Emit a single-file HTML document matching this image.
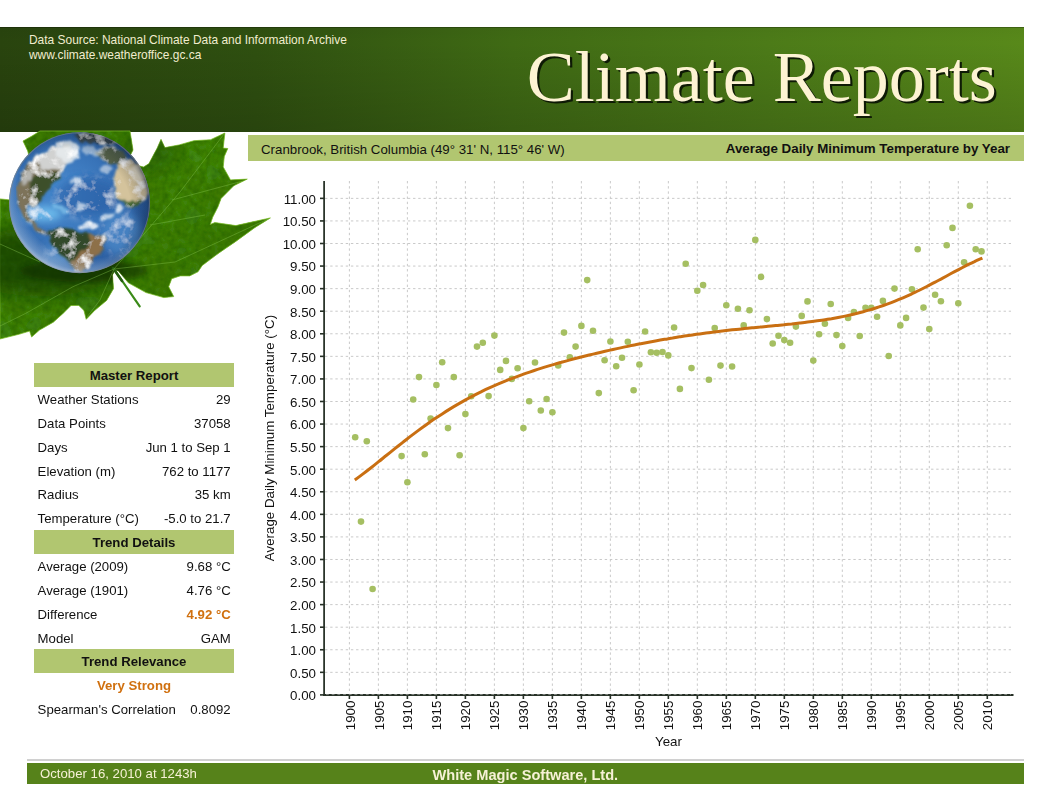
<!DOCTYPE html>
<html lang="en"><head><meta charset="utf-8"><title>Climate Reports</title>
<style>
html,body{margin:0;padding:0;background:#fff;}
body{width:1050px;height:811px;position:relative;overflow:hidden;font-family:"Liberation Sans",sans-serif;color:#111;}
.abs{position:absolute;}
#hdr{left:0;top:26.5px;width:1023.5px;height:105px;background:linear-gradient(180deg,rgba(0,0,0,0.03) 0%,rgba(0,0,0,0.0) 15%,rgba(0,0,0,0.15) 100%),linear-gradient(90deg,#29440e 0%,#2f5010 25%,#3f6a14 50%,#4c7b18 75%,#58891a 100%);box-shadow:inset 0 1px 0 rgba(0,0,0,0.25);}
#src{left:29px;top:32.6px;font-size:11.95px;line-height:15.5px;color:#f1ecce;white-space:nowrap;}
#title{left:526.8px;top:35.8px;font-family:"Liberation Serif",serif;font-size:72px;line-height:82px;color:#fdf3d3;white-space:nowrap;text-shadow:2.2px 2.2px 0 #0e1a05;}
#sub{left:248px;top:135.2px;width:775.5px;height:26.1px;background:#b1c670;font-size:13.33px;line-height:26px;white-space:nowrap;}
#sub .a{position:absolute;left:13px;top:1.7px;font-size:13.28px;}
#sub .b{position:absolute;right:13.5px;top:0.5px;font-weight:bold;}
svg{position:absolute;left:0;top:0;}
.bar{position:absolute;left:34.4px;width:199.2px;height:23.5px;background:#b1c670;text-align:center;font-weight:bold;font-size:13.2px;line-height:25.4px;}
.row{position:absolute;left:37.6px;width:193.1px;height:23.85px;font-size:13.2px;line-height:26.3px;white-space:nowrap;}
.row .l{position:absolute;left:0;}
.row .r{position:absolute;right:0;}
.ctr{text-align:center;left:34.4px;width:199.2px;}
.hl{color:#d0700f;font-weight:bold;}
#fline{left:26.5px;top:759px;width:997px;height:2px;background:#d0d0d0;}
#foot{left:26.5px;top:763.2px;width:997px;height:21.2px;background:#56821a;color:#f6f1d6;font-size:13.2px;line-height:21.6px;white-space:nowrap;}
#foot .a{position:absolute;left:13.5px;top:0;}
#foot .b{position:absolute;left:406px;top:1.4px;font-weight:bold;font-size:14.6px;}
</style></head><body>
<div id="hdr" class="abs"></div>
<svg width="1050" height="811" viewBox="0 0 1050 811">

<defs>
 <linearGradient id="lg" x1="0" y1="0" x2="1" y2="1">
  <stop offset="0" stop-color="#3d7f15"/><stop offset="0.45" stop-color="#428718"/><stop offset="1" stop-color="#347211"/>
 </linearGradient>
 <radialGradient id="gg" cx="0.40" cy="0.45" r="0.65">
  <stop offset="0" stop-color="#4a8dd2"/><stop offset="0.5" stop-color="#3873b8"/><stop offset="0.85" stop-color="#2b5c9e"/><stop offset="1" stop-color="#234a82"/>
 </radialGradient>
 <radialGradient id="gs" cx="0.42" cy="0.56" r="0.62">
  <stop offset="0.72" stop-color="#000" stop-opacity="0"/><stop offset="0.9" stop-color="#0a1a30" stop-opacity="0.25"/><stop offset="1" stop-color="#08142a" stop-opacity="0.65"/>
 </radialGradient>
 <radialGradient id="gl" cx="0.56" cy="0.40" r="0.62">
  <stop offset="0.8" stop-color="#cfe2f5" stop-opacity="0"/><stop offset="0.93" stop-color="#cfe2f5" stop-opacity="0.35"/><stop offset="1" stop-color="#dfeaf6" stop-opacity="0.7"/>
 </radialGradient>
 <clipPath id="gc"><circle cx="79.5" cy="202.7" r="70.5"/></clipPath>
 <clipPath id="lc"><path d="M23.0,141.0 L32.0,136.0 L40.0,131.0 L130.0,131.0 L133.0,150.0 L131.0,154.0 L125.0,162.0 L143.5,167.0 L148.8,163.8 L157.2,148.1 L161.0,139.3 L164.9,147.6 L179.2,144.9 L193.9,140.7 L210.6,139.7 L224.9,133.0 L223.2,148.1 L227.8,148.5 L224.3,156.4 L223.2,166.9 L230.5,179.9 L247.3,179.1 L233.7,185.8 L221.1,198.4 L218.0,206.8 L212.7,217.2 L210.2,224.6 L214.8,222.5 L235.8,225.6 L270.4,217.9 L254.7,227.7 L235.8,241.4 L219.0,252.9 L202.2,265.5 L198.0,271.8 L189.7,275.9 L180.0,275.9 L171.7,278.8 L168.7,286.7 L173.7,296.6 L163.8,297.6 L146.0,292.6 L128.3,282.8 L118.4,270.9 L115.0,270.0 L112.5,274.9 L113.5,288.7 L106.6,300.5 L94.7,310.4 L86.2,319.3 L83.9,310.4 L78.9,305.5 L71.0,305.5 L63.2,313.3 L53.3,322.2 L39.5,330.1 L31.6,337.0 L29.6,331.1 L19.7,334.1 L0.0,339.0 L0.0,198.9 L9.9,199.9 L40.0,200.0 L27.7,151.0Z"/></clipPath>
 <filter id="ln" x="0" y="0" width="100%" height="100%">
  <feTurbulence type="fractalNoise" baseFrequency="0.16" numOctaves="2" seed="3" result="n"/>
  <feColorMatrix in="n" type="matrix" values="0 0 0 0 0.02  0 0 0 0 0.12  0 0 0 0 0  1.3 0 0 0 -0.42" result="a"/>
  <feComposite in="a" in2="SourceGraphic" operator="in" result="sh"/>
  <feTurbulence type="fractalNoise" baseFrequency="0.035" numOctaves="2" seed="11" result="n2"/>
  <feColorMatrix in="n2" type="matrix" values="0 0 0 0 0.05  0 0 0 0 0.18  0 0 0 0 0  0 1.6 0 0 -0.55" result="a2"/>
  <feComposite in="a2" in2="SourceGraphic" operator="in" result="sh2"/>
  <feMerge><feMergeNode in="SourceGraphic"/><feMergeNode in="sh2"/><feMergeNode in="sh"/></feMerge>
 </filter>
 <filter id="gn" x="0" y="0" width="100%" height="100%">
  <feTurbulence type="fractalNoise" baseFrequency="0.014" numOctaves="4" seed="21" result="n"/>
  <feColorMatrix in="n" type="matrix" values="0 0 0 0 1  0 0 0 0 1  0 0 0 0 1  3.2 0 0 0 -1.6" result="a"/>
  <feComposite in="a" in2="SourceGraphic" operator="in" result="cl"/>
  <feMerge><feMergeNode in="SourceGraphic"/><feMergeNode in="cl"/></feMerge>
 </filter>
 <filter id="bl" x="-10%" y="-10%" width="120%" height="120%"><feTurbulence type="fractalNoise" baseFrequency="0.022" numOctaves="3" seed="4" result="t"/><feDisplacementMap in="SourceGraphic" in2="t" scale="42" xChannelSelector="R" yChannelSelector="G" result="d"/><feGaussianBlur in="d" stdDeviation="4.5"/></filter>
 <filter id="bl1"><feGaussianBlur stdDeviation="22"/></filter>
 <filter id="bl2"><feGaussianBlur stdDeviation="2.5"/></filter>
 <filter id="bl3" x="-50%" y="-50%" width="200%" height="200%"><feGaussianBlur stdDeviation="9"/></filter>
</defs>
<g filter="url(#ln)"><path d="M23.0,141.0 L32.0,136.0 L40.0,131.0 L130.0,131.0 L133.0,150.0 L131.0,154.0 L125.0,162.0 L143.5,167.0 L148.8,163.8 L157.2,148.1 L161.0,139.3 L164.9,147.6 L179.2,144.9 L193.9,140.7 L210.6,139.7 L224.9,133.0 L223.2,148.1 L227.8,148.5 L224.3,156.4 L223.2,166.9 L230.5,179.9 L247.3,179.1 L233.7,185.8 L221.1,198.4 L218.0,206.8 L212.7,217.2 L210.2,224.6 L214.8,222.5 L235.8,225.6 L270.4,217.9 L254.7,227.7 L235.8,241.4 L219.0,252.9 L202.2,265.5 L198.0,271.8 L189.7,275.9 L180.0,275.9 L171.7,278.8 L168.7,286.7 L173.7,296.6 L163.8,297.6 L146.0,292.6 L128.3,282.8 L118.4,270.9 L115.0,270.0 L112.5,274.9 L113.5,288.7 L106.6,300.5 L94.7,310.4 L86.2,319.3 L83.9,310.4 L78.9,305.5 L71.0,305.5 L63.2,313.3 L53.3,322.2 L39.5,330.1 L31.6,337.0 L29.6,331.1 L19.7,334.1 L0.0,339.0 L0.0,198.9 L9.9,199.9 L40.0,200.0 L27.7,151.0Z" fill="url(#lg)"/></g>
<path d="M23.0,141.0 L32.0,136.0 L40.0,131.0 L130.0,131.0 L133.0,150.0 L131.0,154.0 L125.0,162.0 L143.5,167.0 L148.8,163.8 L157.2,148.1 L161.0,139.3 L164.9,147.6 L179.2,144.9 L193.9,140.7 L210.6,139.7 L224.9,133.0 L223.2,148.1 L227.8,148.5 L224.3,156.4 L223.2,166.9 L230.5,179.9 L247.3,179.1 L233.7,185.8 L221.1,198.4 L218.0,206.8 L212.7,217.2 L210.2,224.6 L214.8,222.5 L235.8,225.6 L270.4,217.9 L254.7,227.7 L235.8,241.4 L219.0,252.9 L202.2,265.5 L198.0,271.8 L189.7,275.9 L180.0,275.9 L171.7,278.8 L168.7,286.7 L173.7,296.6 L163.8,297.6 L146.0,292.6 L128.3,282.8 L118.4,270.9 L115.0,270.0 L112.5,274.9 L113.5,288.7 L106.6,300.5 L94.7,310.4 L86.2,319.3 L83.9,310.4 L78.9,305.5 L71.0,305.5 L63.2,313.3 L53.3,322.2 L39.5,330.1 L31.6,337.0 L29.6,331.1 L19.7,334.1 L0.0,339.0 L0.0,198.9 L9.9,199.9 L40.0,200.0 L27.7,151.0Z" fill="none" stroke="#7dbd2a" stroke-width="0.9" opacity="0.8"/>
<g clip-path="url(#lc)">
 <ellipse cx="40" cy="262" rx="85" ry="34" fill="#0f3304" opacity="0.62" filter="url(#bl3)"/>
 <ellipse cx="84" cy="271" rx="64" ry="11" fill="#0b2603" opacity="0.5" filter="url(#bl2)"/>
 <ellipse cx="150" cy="150" rx="26" ry="22" fill="#163f07" opacity="0.35" filter="url(#bl3)"/>
</g>
<path d="M114,269 L139.7,306.4" stroke="#3a8a18" stroke-width="2.2" stroke-linecap="round" fill="none"/>
<path d="M113,268 L122,281" stroke="#245c10" stroke-width="2.6" stroke-linecap="round" fill="none"/>
<g stroke="#86c44e" stroke-width="0.8" fill="none" opacity="0.5">
 <path d="M114,269 L180,192 L224,134"/>
 <path d="M114,269 L73,286.7 L25.7,313.4 L0,326"/>
 <path d="M114,269 L175,262 L268,219"/>
 <path d="M114,269 L100,300 L87,317"/>
 <path d="M40,262 L0,244"/>
 <path d="M150,225 L205,215"/>
 <path d="M172,200 L243,181"/>
</g>
<circle cx="79.5" cy="202.7" r="70.5" fill="url(#gg)"/>
<g clip-path="url(#gc)">
 <g transform="translate(0,125) scale(0.18495)" filter="url(#gn)">
  <g filter="url(#bl1)">
   <ellipse cx="230" cy="480" rx="105" ry="42" fill="#74c4f2" opacity="0.85"/>
   <ellipse cx="470" cy="390" rx="170" ry="105" fill="#285aa2" opacity="0.6"/>
   <ellipse cx="660" cy="590" rx="110" ry="120" fill="#5a9ad8" opacity="0.55"/>
   <ellipse cx="330" cy="690" rx="90" ry="60" fill="#6aa6dc" opacity="0.45"/>
  </g>
  <g filter="url(#bl)">
   <path d="M95,330 L120,250 L170,190 L230,150 L300,120 L360,110 L400,130 L380,180 L340,230 L330,270 L290,300 L270,340 L240,370 L215,400 L205,430 L180,445 L150,430 L140,470 L160,500 L200,540 L240,570 L262,600 L230,590 L180,550 L130,500 L100,440 L88,380Z" fill="#7d735a"/>
   <path d="M165,290 L230,262 L300,268 L335,268 L295,305 L272,345 L242,375 L215,410 L188,405 L158,372 L150,330Z" fill="#3c4f2c"/>
   <path d="M200,160 L300,118 L400,128 L380,180 L340,232 L300,250 L240,240 L200,215Z" fill="#dfe3e6" opacity="0.85"/>
   <path d="M110,300 L150,240 L185,235 L165,290 L130,330Z" fill="#cfd3d6" opacity="0.7"/>
   <path d="M262,575 L300,558 L350,560 L420,575 L470,590 L530,595 L575,608 L570,640 L545,690 L500,730 L470,770 L430,790 L395,775 L370,740 L330,700 L290,660 L265,620Z" fill="#33492a"/>
   <path d="M470,592 L530,596 L574,609 L568,642 L544,690 L500,730 L470,770 L430,790 L400,778 L390,740 L430,700 L470,660 L480,620Z" fill="#8d704a"/>
   <path d="M615,260 L640,215 L700,190 L750,210 L785,270 L803,330 L795,390 L765,430 L720,447 L670,432 L640,400 L620,340Z" fill="#d4c39c"/>
   <path d="M640,400 L690,415 L740,410 L775,400 L765,432 L720,449 L670,434Z" fill="#4a6a34"/>
   <path d="M680,230 L740,220 L775,280 L760,330 L720,300Z" fill="#efe6d0" opacity="0.8"/>
   <path d="M520,150 L570,118 L640,128 L690,170 L665,205 L600,212 L555,192Z" fill="#55624a"/>
   <path d="M400,48 L470,40 L560,50 L630,90 L600,110 L520,100 L440,90Z" fill="#3e4a4c"/>
   <path d="M300,95 L380,80 L430,110 L420,180 L360,205 L310,170Z" fill="#e8ecef" opacity="0.85"/>
   <ellipse cx="412" cy="297" rx="36" ry="18" transform="rotate(-25 412 297)" fill="#f2f5f7" opacity="0.6"/>
   <ellipse cx="440" cy="440" rx="32" ry="16" transform="rotate(-10 440 440)" fill="#eef2f5" opacity="0.7"/>
   <ellipse cx="480" cy="545" rx="52" ry="20" transform="rotate(-8 480 545)" fill="#f2f5f7" opacity="0.8"/>
   <ellipse cx="578" cy="495" rx="40" ry="15" transform="rotate(-20 578 495)" fill="#eef2f5" opacity="0.7"/>
   <ellipse cx="642" cy="452" rx="22" ry="16" fill="#f5f7f9" opacity="0.8"/>
   <ellipse cx="575" cy="238" rx="36" ry="18" transform="rotate(-10 575 238)" fill="#e5eaee" opacity="0.6"/>
   <ellipse cx="500" cy="140" rx="58" ry="24" transform="rotate(8 500 140)" fill="#dfe5ea" opacity="0.55"/>
   <ellipse cx="330" cy="450" rx="60" ry="14" transform="rotate(20 330 450)" fill="#8fd0f5" opacity="0.6"/>
  </g>
 </g>
 <circle cx="79.5" cy="202.7" r="70.5" fill="url(#gs)"/>
 <circle cx="79.5" cy="202.7" r="70.5" fill="url(#gl)"/>
 <circle cx="79.5" cy="202.7" r="70" fill="none" stroke="#8f8a80" stroke-width="1.2" opacity="0.55"/>
</g>

</svg>
<div id="src" class="abs">Data Source: National Climate Data and Information Archive<br>www.climate.weatheroffice.gc.ca</div>
<div id="title" class="abs">Climate Reports</div>
<div id="sub" class="abs"><span class="a">Cranbrook, British Columbia (49° 31' N, 115° 46' W)</span><span class="b">Average Daily Minimum Temperature by Year</span></div>
<svg width="1050" height="811" viewBox="0 0 1050 811">
<g stroke="#c9c9c9" stroke-width="1" stroke-dasharray="2.4 2.78" fill="none"><line x1="325" y1="672.33" x2="1011" y2="672.33"/><line x1="325" y1="649.76" x2="1011" y2="649.76"/><line x1="325" y1="627.19" x2="1011" y2="627.19"/><line x1="325" y1="604.62" x2="1011" y2="604.62"/><line x1="325" y1="582.05" x2="1011" y2="582.05"/><line x1="325" y1="559.48" x2="1011" y2="559.48"/><line x1="325" y1="536.91" x2="1011" y2="536.91"/><line x1="325" y1="514.34" x2="1011" y2="514.34"/><line x1="325" y1="491.77" x2="1011" y2="491.77"/><line x1="325" y1="469.20" x2="1011" y2="469.20"/><line x1="325" y1="446.63" x2="1011" y2="446.63"/><line x1="325" y1="424.06" x2="1011" y2="424.06"/><line x1="325" y1="401.49" x2="1011" y2="401.49"/><line x1="325" y1="378.92" x2="1011" y2="378.92"/><line x1="325" y1="356.35" x2="1011" y2="356.35"/><line x1="325" y1="333.78" x2="1011" y2="333.78"/><line x1="325" y1="311.21" x2="1011" y2="311.21"/><line x1="325" y1="288.64" x2="1011" y2="288.64"/><line x1="325" y1="266.07" x2="1011" y2="266.07"/><line x1="325" y1="243.50" x2="1011" y2="243.50"/><line x1="325" y1="220.93" x2="1011" y2="220.93"/><line x1="325" y1="198.36" x2="1011" y2="198.36"/><line x1="349.40" y1="181" x2="349.40" y2="694"/><line x1="378.39" y1="181" x2="378.39" y2="694"/><line x1="407.39" y1="181" x2="407.39" y2="694"/><line x1="436.38" y1="181" x2="436.38" y2="694"/><line x1="465.38" y1="181" x2="465.38" y2="694"/><line x1="494.38" y1="181" x2="494.38" y2="694"/><line x1="523.37" y1="181" x2="523.37" y2="694"/><line x1="552.37" y1="181" x2="552.37" y2="694"/><line x1="581.36" y1="181" x2="581.36" y2="694"/><line x1="610.36" y1="181" x2="610.36" y2="694"/><line x1="639.35" y1="181" x2="639.35" y2="694"/><line x1="668.35" y1="181" x2="668.35" y2="694"/><line x1="697.34" y1="181" x2="697.34" y2="694"/><line x1="726.34" y1="181" x2="726.34" y2="694"/><line x1="755.33" y1="181" x2="755.33" y2="694"/><line x1="784.33" y1="181" x2="784.33" y2="694"/><line x1="813.32" y1="181" x2="813.32" y2="694"/><line x1="842.32" y1="181" x2="842.32" y2="694"/><line x1="871.31" y1="181" x2="871.31" y2="694"/><line x1="900.31" y1="181" x2="900.31" y2="694"/><line x1="929.30" y1="181" x2="929.30" y2="694"/><line x1="958.30" y1="181" x2="958.30" y2="694"/><line x1="987.29" y1="181" x2="987.29" y2="694"/></g>
<g stroke="#263026" fill="none"><line x1="324.1" y1="181" x2="324.1" y2="696" stroke-width="1.75"/><line x1="323.2" y1="695" x2="1013.5" y2="695" stroke-width="1.8"/><line x1="320" y1="694.90" x2="324" y2="694.90" stroke-width="1.6"/><line x1="320" y1="672.33" x2="324" y2="672.33" stroke-width="1.6"/><line x1="320" y1="649.76" x2="324" y2="649.76" stroke-width="1.6"/><line x1="320" y1="627.19" x2="324" y2="627.19" stroke-width="1.6"/><line x1="320" y1="604.62" x2="324" y2="604.62" stroke-width="1.6"/><line x1="320" y1="582.05" x2="324" y2="582.05" stroke-width="1.6"/><line x1="320" y1="559.48" x2="324" y2="559.48" stroke-width="1.6"/><line x1="320" y1="536.91" x2="324" y2="536.91" stroke-width="1.6"/><line x1="320" y1="514.34" x2="324" y2="514.34" stroke-width="1.6"/><line x1="320" y1="491.77" x2="324" y2="491.77" stroke-width="1.6"/><line x1="320" y1="469.20" x2="324" y2="469.20" stroke-width="1.6"/><line x1="320" y1="446.63" x2="324" y2="446.63" stroke-width="1.6"/><line x1="320" y1="424.06" x2="324" y2="424.06" stroke-width="1.6"/><line x1="320" y1="401.49" x2="324" y2="401.49" stroke-width="1.6"/><line x1="320" y1="378.92" x2="324" y2="378.92" stroke-width="1.6"/><line x1="320" y1="356.35" x2="324" y2="356.35" stroke-width="1.6"/><line x1="320" y1="333.78" x2="324" y2="333.78" stroke-width="1.6"/><line x1="320" y1="311.21" x2="324" y2="311.21" stroke-width="1.6"/><line x1="320" y1="288.64" x2="324" y2="288.64" stroke-width="1.6"/><line x1="320" y1="266.07" x2="324" y2="266.07" stroke-width="1.6"/><line x1="320" y1="243.50" x2="324" y2="243.50" stroke-width="1.6"/><line x1="320" y1="220.93" x2="324" y2="220.93" stroke-width="1.6"/><line x1="320" y1="198.36" x2="324" y2="198.36" stroke-width="1.6"/><line x1="349.40" y1="695" x2="349.40" y2="699" stroke-width="1.6"/><line x1="378.39" y1="695" x2="378.39" y2="699" stroke-width="1.6"/><line x1="407.39" y1="695" x2="407.39" y2="699" stroke-width="1.6"/><line x1="436.38" y1="695" x2="436.38" y2="699" stroke-width="1.6"/><line x1="465.38" y1="695" x2="465.38" y2="699" stroke-width="1.6"/><line x1="494.38" y1="695" x2="494.38" y2="699" stroke-width="1.6"/><line x1="523.37" y1="695" x2="523.37" y2="699" stroke-width="1.6"/><line x1="552.37" y1="695" x2="552.37" y2="699" stroke-width="1.6"/><line x1="581.36" y1="695" x2="581.36" y2="699" stroke-width="1.6"/><line x1="610.36" y1="695" x2="610.36" y2="699" stroke-width="1.6"/><line x1="639.35" y1="695" x2="639.35" y2="699" stroke-width="1.6"/><line x1="668.35" y1="695" x2="668.35" y2="699" stroke-width="1.6"/><line x1="697.34" y1="695" x2="697.34" y2="699" stroke-width="1.6"/><line x1="726.34" y1="695" x2="726.34" y2="699" stroke-width="1.6"/><line x1="755.33" y1="695" x2="755.33" y2="699" stroke-width="1.6"/><line x1="784.33" y1="695" x2="784.33" y2="699" stroke-width="1.6"/><line x1="813.32" y1="695" x2="813.32" y2="699" stroke-width="1.6"/><line x1="842.32" y1="695" x2="842.32" y2="699" stroke-width="1.6"/><line x1="871.31" y1="695" x2="871.31" y2="699" stroke-width="1.6"/><line x1="900.31" y1="695" x2="900.31" y2="699" stroke-width="1.6"/><line x1="929.30" y1="695" x2="929.30" y2="699" stroke-width="1.6"/><line x1="958.30" y1="695" x2="958.30" y2="699" stroke-width="1.6"/><line x1="987.29" y1="695" x2="987.29" y2="699" stroke-width="1.6"/></g>
<line x1="326" y1="694.6" x2="1011" y2="694.6" stroke="#c9c9c9" stroke-width="1" stroke-dasharray="2.8 2.9" opacity="0.55"/>
<g font-family="'Liberation Sans', sans-serif" font-size="13.33" fill="#111"><text x="316" y="700.25" text-anchor="end">0.00</text><text x="316" y="677.68" text-anchor="end">0.50</text><text x="316" y="655.11" text-anchor="end">1.00</text><text x="316" y="632.54" text-anchor="end">1.50</text><text x="316" y="609.97" text-anchor="end">2.00</text><text x="316" y="587.40" text-anchor="end">2.50</text><text x="316" y="564.83" text-anchor="end">3.00</text><text x="316" y="542.26" text-anchor="end">3.50</text><text x="316" y="519.69" text-anchor="end">4.00</text><text x="316" y="497.12" text-anchor="end">4.50</text><text x="316" y="474.55" text-anchor="end">5.00</text><text x="316" y="451.98" text-anchor="end">5.50</text><text x="316" y="429.41" text-anchor="end">6.00</text><text x="316" y="406.84" text-anchor="end">6.50</text><text x="316" y="384.27" text-anchor="end">7.00</text><text x="316" y="361.70" text-anchor="end">7.50</text><text x="316" y="339.13" text-anchor="end">8.00</text><text x="316" y="316.56" text-anchor="end">8.50</text><text x="316" y="293.99" text-anchor="end">9.00</text><text x="316" y="271.42" text-anchor="end">9.50</text><text x="316" y="248.85" text-anchor="end">10.00</text><text x="316" y="226.28" text-anchor="end">10.50</text><text x="316" y="203.71" text-anchor="end">11.00</text><text transform="translate(354.50,730.2) rotate(-90)">1900</text><text transform="translate(383.50,730.2) rotate(-90)">1905</text><text transform="translate(412.49,730.2) rotate(-90)">1910</text><text transform="translate(441.49,730.2) rotate(-90)">1915</text><text transform="translate(470.48,730.2) rotate(-90)">1920</text><text transform="translate(499.48,730.2) rotate(-90)">1925</text><text transform="translate(528.47,730.2) rotate(-90)">1930</text><text transform="translate(557.47,730.2) rotate(-90)">1935</text><text transform="translate(586.46,730.2) rotate(-90)">1940</text><text transform="translate(615.46,730.2) rotate(-90)">1945</text><text transform="translate(644.45,730.2) rotate(-90)">1950</text><text transform="translate(673.45,730.2) rotate(-90)">1955</text><text transform="translate(702.44,730.2) rotate(-90)">1960</text><text transform="translate(731.44,730.2) rotate(-90)">1965</text><text transform="translate(760.43,730.2) rotate(-90)">1970</text><text transform="translate(789.43,730.2) rotate(-90)">1975</text><text transform="translate(818.42,730.2) rotate(-90)">1980</text><text transform="translate(847.42,730.2) rotate(-90)">1985</text><text transform="translate(876.41,730.2) rotate(-90)">1990</text><text transform="translate(905.41,730.2) rotate(-90)">1995</text><text transform="translate(934.40,730.2) rotate(-90)">2000</text><text transform="translate(963.40,730.2) rotate(-90)">2005</text><text transform="translate(992.39,730.2) rotate(-90)">2010</text><text x="668.5" y="745.6" text-anchor="middle">Year</text><text transform="translate(274,438) rotate(-90)" text-anchor="middle">Average Daily Minimum Temperature (°C)</text></g>
<g fill="#a5bf62"><circle cx="355.2" cy="437.2" r="3.3"/><circle cx="361.0" cy="521.6" r="3.3"/><circle cx="366.8" cy="441.2" r="3.3"/><circle cx="372.6" cy="589.0" r="3.3"/><circle cx="401.6" cy="456.1" r="3.3"/><circle cx="407.4" cy="482.3" r="3.3"/><circle cx="413.2" cy="399.5" r="3.3"/><circle cx="419.0" cy="377.1" r="3.3"/><circle cx="424.8" cy="454.3" r="3.3"/><circle cx="430.6" cy="418.6" r="3.3"/><circle cx="436.4" cy="385.0" r="3.3"/><circle cx="442.2" cy="362.2" r="3.3"/><circle cx="448.0" cy="428.1" r="3.3"/><circle cx="453.8" cy="377.1" r="3.3"/><circle cx="459.6" cy="455.2" r="3.3"/><circle cx="465.4" cy="414.1" r="3.3"/><circle cx="471.2" cy="396.3" r="3.3"/><circle cx="477.0" cy="346.6" r="3.3"/><circle cx="482.8" cy="342.8" r="3.3"/><circle cx="488.6" cy="396.1" r="3.3"/><circle cx="494.4" cy="335.6" r="3.3"/><circle cx="500.2" cy="369.9" r="3.3"/><circle cx="506.0" cy="360.9" r="3.3"/><circle cx="511.8" cy="378.9" r="3.3"/><circle cx="517.6" cy="368.3" r="3.3"/><circle cx="523.4" cy="428.1" r="3.3"/><circle cx="529.2" cy="401.3" r="3.3"/><circle cx="535.0" cy="362.5" r="3.3"/><circle cx="540.8" cy="410.5" r="3.3"/><circle cx="546.6" cy="399.0" r="3.3"/><circle cx="552.4" cy="412.3" r="3.3"/><circle cx="558.2" cy="365.4" r="3.3"/><circle cx="564.0" cy="332.6" r="3.3"/><circle cx="569.8" cy="357.3" r="3.3"/><circle cx="575.6" cy="346.6" r="3.3"/><circle cx="581.4" cy="325.9" r="3.3"/><circle cx="587.2" cy="280.1" r="3.3"/><circle cx="593.0" cy="330.8" r="3.3"/><circle cx="598.8" cy="393.1" r="3.3"/><circle cx="604.6" cy="360.2" r="3.3"/><circle cx="610.4" cy="341.5" r="3.3"/><circle cx="616.2" cy="366.3" r="3.3"/><circle cx="622.0" cy="357.7" r="3.3"/><circle cx="627.8" cy="341.7" r="3.3"/><circle cx="633.6" cy="390.2" r="3.3"/><circle cx="639.4" cy="364.5" r="3.3"/><circle cx="645.1" cy="331.5" r="3.3"/><circle cx="650.9" cy="352.3" r="3.3"/><circle cx="656.7" cy="352.7" r="3.3"/><circle cx="662.5" cy="352.0" r="3.3"/><circle cx="668.3" cy="355.4" r="3.3"/><circle cx="674.1" cy="327.5" r="3.3"/><circle cx="679.9" cy="388.9" r="3.3"/><circle cx="685.7" cy="263.8" r="3.3"/><circle cx="691.5" cy="368.1" r="3.3"/><circle cx="697.3" cy="290.7" r="3.3"/><circle cx="703.1" cy="285.0" r="3.3"/><circle cx="708.9" cy="379.8" r="3.3"/><circle cx="714.7" cy="328.0" r="3.3"/><circle cx="720.5" cy="365.6" r="3.3"/><circle cx="726.3" cy="305.3" r="3.3"/><circle cx="732.1" cy="366.5" r="3.3"/><circle cx="737.9" cy="308.8" r="3.3"/><circle cx="743.7" cy="325.4" r="3.3"/><circle cx="749.5" cy="310.3" r="3.3"/><circle cx="755.3" cy="239.9" r="3.3"/><circle cx="761.1" cy="276.9" r="3.3"/><circle cx="766.9" cy="319.1" r="3.3"/><circle cx="772.7" cy="343.5" r="3.3"/><circle cx="778.5" cy="335.7" r="3.3"/><circle cx="784.3" cy="340.1" r="3.3"/><circle cx="790.1" cy="342.8" r="3.3"/><circle cx="795.9" cy="326.6" r="3.3"/><circle cx="801.7" cy="315.9" r="3.3"/><circle cx="807.5" cy="301.4" r="3.3"/><circle cx="813.3" cy="360.6" r="3.3"/><circle cx="819.1" cy="334.3" r="3.3"/><circle cx="824.9" cy="323.8" r="3.3"/><circle cx="830.7" cy="304.0" r="3.3"/><circle cx="836.5" cy="335.1" r="3.3"/><circle cx="842.3" cy="346.1" r="3.3"/><circle cx="848.1" cy="318.0" r="3.3"/><circle cx="853.9" cy="312.0" r="3.3"/><circle cx="859.7" cy="336.0" r="3.3"/><circle cx="865.5" cy="307.7" r="3.3"/><circle cx="871.3" cy="307.7" r="3.3"/><circle cx="877.1" cy="316.7" r="3.3"/><circle cx="882.9" cy="300.9" r="3.3"/><circle cx="888.7" cy="356.0" r="3.3"/><circle cx="894.5" cy="288.6" r="3.3"/><circle cx="900.3" cy="325.4" r="3.3"/><circle cx="906.1" cy="317.9" r="3.3"/><circle cx="911.9" cy="289.3" r="3.3"/><circle cx="917.7" cy="249.3" r="3.3"/><circle cx="923.5" cy="307.6" r="3.3"/><circle cx="929.3" cy="329.0" r="3.3"/><circle cx="935.1" cy="294.7" r="3.3"/><circle cx="940.9" cy="301.3" r="3.3"/><circle cx="946.7" cy="245.3" r="3.3"/><circle cx="952.5" cy="227.9" r="3.3"/><circle cx="958.3" cy="303.3" r="3.3"/><circle cx="964.1" cy="262.2" r="3.3"/><circle cx="969.9" cy="205.8" r="3.3"/><circle cx="975.7" cy="249.2" r="3.3"/><circle cx="981.5" cy="251.4" r="3.3"/></g>
<path d="M354.8,479.9 C356.1,479.0 360.1,476.1 362.7,474.1 C365.4,472.1 368.0,470.1 370.7,468.0 C373.3,465.9 376.0,463.8 378.6,461.7 C381.3,459.6 383.9,457.4 386.6,455.3 C389.2,453.2 391.9,451.0 394.5,448.9 C397.2,446.8 399.8,444.7 402.5,442.6 C405.1,440.5 407.8,438.5 410.4,436.4 C413.1,434.4 415.7,432.4 418.4,430.4 C421.0,428.5 423.7,426.6 426.3,424.7 C428.9,422.8 431.6,420.9 434.2,419.1 C436.9,417.3 439.5,415.6 442.2,413.9 C444.8,412.2 447.5,410.5 450.1,408.9 C452.8,407.2 455.4,405.6 458.1,404.1 C460.7,402.6 463.4,401.1 466.0,399.6 C468.7,398.2 471.3,396.8 474.0,395.4 C476.6,394.0 479.3,392.7 481.9,391.4 C484.6,390.1 487.2,388.9 489.9,387.7 C492.5,386.5 495.1,385.3 497.8,384.2 C500.4,383.0 503.1,381.9 505.7,380.9 C508.4,379.8 511.0,378.8 513.7,377.8 C516.3,376.8 519.0,375.8 521.6,374.8 C524.3,373.9 526.9,373.0 529.6,372.1 C532.2,371.2 534.9,370.3 537.5,369.4 C540.2,368.6 542.8,367.7 545.5,366.9 C548.1,366.1 550.8,365.3 553.4,364.6 C556.1,363.8 558.7,363.0 561.4,362.3 C564.0,361.5 566.6,360.8 569.3,360.1 C571.9,359.4 574.6,358.7 577.2,358.0 C579.9,357.3 582.5,356.7 585.2,356.0 C587.8,355.4 590.5,354.7 593.1,354.1 C595.8,353.4 598.4,352.8 601.1,352.2 C603.7,351.6 606.4,351.0 609.0,350.4 C611.7,349.8 614.3,349.2 617.0,348.6 C619.6,348.1 622.3,347.5 624.9,346.9 C627.6,346.4 630.2,345.8 632.9,345.3 C635.5,344.8 638.1,344.2 640.8,343.7 C643.4,343.2 646.1,342.7 648.7,342.2 C651.4,341.7 654.0,341.2 656.7,340.7 C659.3,340.3 662.0,339.8 664.6,339.3 C667.3,338.9 669.9,338.4 672.6,338.0 C675.2,337.5 677.9,337.1 680.5,336.7 C683.2,336.3 685.8,335.9 688.5,335.5 C691.1,335.1 693.8,334.7 696.4,334.3 C699.1,334.0 701.7,333.6 704.3,333.2 C707.0,332.9 709.6,332.5 712.3,332.2 C714.9,331.9 717.6,331.5 720.2,331.2 C722.9,330.9 725.5,330.6 728.2,330.3 C730.8,330.0 733.5,329.7 736.1,329.4 C738.8,329.2 741.4,328.9 744.1,328.6 C746.7,328.4 749.4,328.1 752.0,327.8 C754.7,327.6 757.3,327.3 760.0,327.1 C762.6,326.8 765.3,326.6 767.9,326.3 C770.6,326.1 773.2,325.8 775.8,325.5 C778.5,325.3 781.1,325.0 783.8,324.8 C786.4,324.5 789.1,324.2 791.7,324.0 C794.4,323.7 797.0,323.4 799.7,323.1 C802.3,322.8 805.0,322.5 807.6,322.1 C810.3,321.8 812.9,321.5 815.6,321.1 C818.2,320.7 820.9,320.4 823.5,320.0 C826.2,319.6 828.8,319.1 831.5,318.7 C834.1,318.2 836.8,317.7 839.4,317.2 C842.1,316.7 844.7,316.2 847.3,315.6 C850.0,315.0 852.6,314.4 855.3,313.8 C857.9,313.1 860.6,312.4 863.2,311.7 C865.9,311.0 868.5,310.2 871.2,309.4 C873.8,308.6 876.5,307.8 879.1,306.9 C881.8,306.0 884.4,305.1 887.1,304.1 C889.7,303.2 892.4,302.2 895.0,301.1 C897.7,300.0 900.3,298.9 903.0,297.8 C905.6,296.7 908.3,295.5 910.9,294.3 C913.5,293.0 916.2,291.8 918.8,290.5 C921.5,289.2 924.1,287.9 926.8,286.5 C929.4,285.1 932.1,283.8 934.7,282.4 C937.4,281.0 940.0,279.5 942.7,278.1 C945.3,276.7 948.0,275.2 950.6,273.8 C953.3,272.4 955.9,271.0 958.6,269.6 C961.2,268.2 963.9,266.8 966.5,265.4 C969.2,264.1 971.8,262.8 974.5,261.6 C977.1,260.3 981.1,258.7 982.4,258.1" fill="none" stroke="#c96f12" stroke-width="3" stroke-linecap="butt" stroke-linejoin="round"/>
</svg>
<div class="bar" style="top:363.20px">Master Report</div>
<div class="row" style="top:387.05px"><span class="l">Weather Stations</span><span class="r ">29</span></div>
<div class="row" style="top:410.90px"><span class="l">Data Points</span><span class="r ">37058</span></div>
<div class="row" style="top:434.75px"><span class="l">Days</span><span class="r ">Jun 1 to Sep 1</span></div>
<div class="row" style="top:458.60px"><span class="l">Elevation (m)</span><span class="r ">762 to 1177</span></div>
<div class="row" style="top:482.45px"><span class="l">Radius</span><span class="r ">35 km</span></div>
<div class="row" style="top:506.30px"><span class="l">Temperature (°C)</span><span class="r ">-5.0 to 21.7</span></div>
<div class="bar" style="top:530.15px">Trend Details</div>
<div class="row" style="top:554.00px"><span class="l">Average (2009)</span><span class="r ">9.68 °C</span></div>
<div class="row" style="top:577.85px"><span class="l">Average (1901)</span><span class="r ">4.76 °C</span></div>
<div class="row" style="top:601.70px"><span class="l">Difference</span><span class="r hl">4.92 °C</span></div>
<div class="row" style="top:625.55px"><span class="l">Model</span><span class="r ">GAM</span></div>
<div class="bar" style="top:649.40px">Trend Relevance</div>
<div class="row ctr hl" style="top:673.25px">Very Strong</div>
<div class="row" style="top:697.10px"><span class="l">Spearman's Correlation</span><span class="r ">0.8092</span></div>
<div id="fline" class="abs"></div>
<div id="foot" class="abs"><span class="a">October 16, 2010 at 1243h</span><span class="b">White Magic Software, Ltd.</span></div>
</body></html>
